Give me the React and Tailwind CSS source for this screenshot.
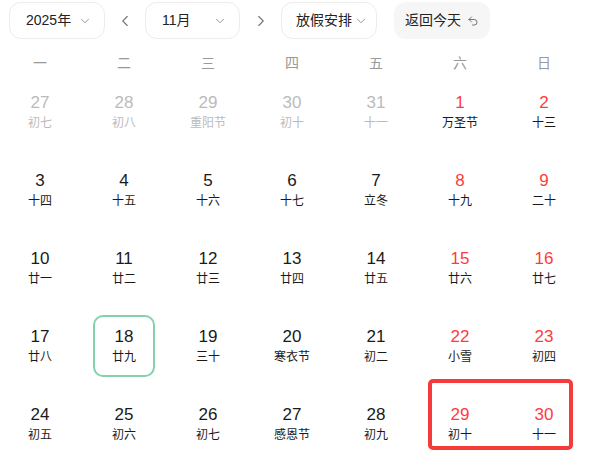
import React from "react";
import { ChevronDown, ChevronLeft, ChevronRight, Undo2 } from "lucide-react";

const weekDays = ["一", "二", "三", "四", "五", "六", "日"];

const days = [
  [27, "初七", "o"], [28, "初八", "o"], [29, "重阳节", "o"], [30, "初十", "o"], [31, "十一", "o"], [1, "万圣节", "r"], [2, "十三", "r"],
  [3, "十四"], [4, "十五"], [5, "十六"], [6, "十七"], [7, "立冬"], [8, "十九", "r"], [9, "二十", "r"],
  [10, "廿一"], [11, "廿二"], [12, "廿三"], [13, "廿四"], [14, "廿五"], [15, "廿六", "r"], [16, "廿七", "r"],
  [17, "廿八"], [18, "廿九", "t"], [19, "三十"], [20, "寒衣节"], [21, "初二"], [22, "小雪", "r"], [23, "初四", "r"],
  [24, "初五"], [25, "初六"], [26, "初七"], [27, "感恩节"], [28, "初九"], [29, "初十", "r"], [30, "十一", "r"],
];

const Select = ({ label, className }) => (
  <button
    className={`h-[37px] flex items-center justify-between rounded-[12px] border border-[#ececec] bg-white text-[14px] text-[#222] ${className}`}
  >
    <span>{label}</span>
    <ChevronDown className="h-[14px] w-[14px] text-[#888]" strokeWidth={1.5} />
  </button>
);

const DayCell = ({ num, lunar, kind }) => {
  const numColor =
    kind === "o" ? "text-[#bbbbbb]" : kind === "r" ? "text-[#ff3b3b]" : "text-[#1a1a1a]";
  const lunarColor = kind === "o" ? "text-[#bbbbbb]" : "text-[#1a1a1a]";
  return (
    <div className="h-[78px] flex items-center justify-center">
      <div
        className={`w-[62px] h-[62px] flex flex-col items-center justify-center rounded-[10px] border-2 ${
          kind === "t" ? "border-[#82d3ab]" : "border-transparent"
        }`}
      >
        <span className={`text-[17px] leading-[20px] ${numColor}`}>{num}</span>
        <span className={`mt-[2px] text-[12px] leading-[16px] ${lunarColor}`}>{lunar}</span>
      </div>
    </div>
  );
};

export default function App() {
  return (
    <div
      className="relative w-[590px] h-[452px] overflow-hidden bg-white"
      style={{ fontFamily: '"Liberation Sans", "Noto Sans CJK SC", sans-serif' }}
    >
      <div className="flex items-center pt-[2px] pl-[9px]">
        <Select label="2025年" className="w-[96px] pl-[16px] pr-[12px]" />
        <button className="w-[40px] h-[37px] flex items-center justify-center text-[#777]">
          <ChevronLeft className="h-[18px] w-[18px]" strokeWidth={1.5} />
        </button>
        <Select label="11月" className="w-[95px] pl-[16px] pr-[12px]" />
        <button className="w-[41px] h-[37px] flex items-center justify-center text-[#777]">
          <ChevronRight className="h-[18px] w-[18px]" strokeWidth={1.5} />
        </button>
        <Select label="放假安排" className="w-[96px] pl-[14px] pr-[8px]" />
        <button className="ml-[17px] w-[96px] h-[37px] flex items-center justify-center gap-[6px] rounded-[12px] bg-[#f6f6f6] text-[14px] text-[#222]">
          返回今天
          <Undo2 className="h-[12px] w-[12px] text-[#666]" strokeWidth={1.8} />
        </button>
      </div>

      <div className="ml-[-2px] w-[588px]">
        <div className="grid grid-cols-7 h-[34px] items-end">
          {weekDays.map((d) => (
            <div key={d} className="text-center text-[14px] leading-[20px] text-[#999]">
              {d}
            </div>
          ))}
        </div>
        <div className="grid grid-cols-7">
          {days.map(([num, lunar, kind], i) => (
            <DayCell key={i} num={num} lunar={lunar} kind={kind} />
          ))}
        </div>
      </div>

      <div className="absolute left-[428px] top-[379px] w-[145px] h-[71px] rounded-[5px] border-[4px] border-[#f53a3a]" />
    </div>
  );
}
